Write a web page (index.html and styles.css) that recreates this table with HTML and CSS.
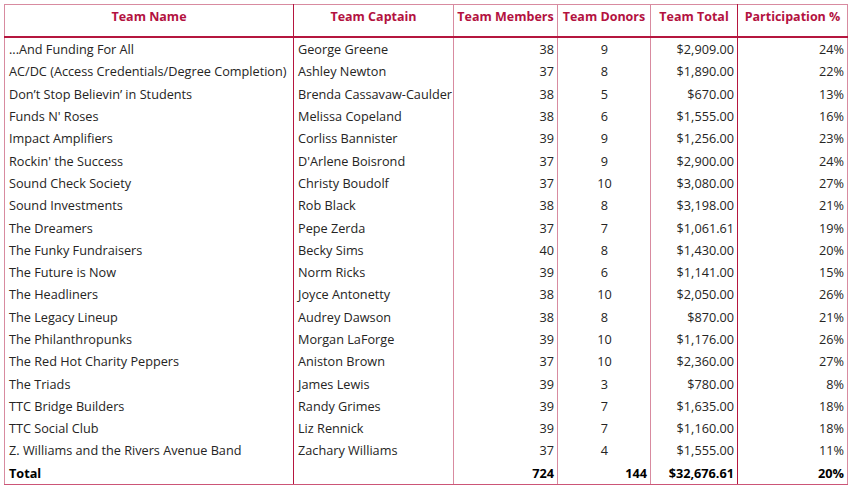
FILE: index.html
```html
<!DOCTYPE html>
<html>
<head>
<meta charset="utf-8">
<link rel="stylesheet" href="styles.css">
</head>
<body>
<table class="grid">
  <colgroup>
    <col class="c-name"><col class="c-captain"><col class="c-members"><col class="c-donors"><col class="c-total"><col class="c-part">
  </colgroup>
  <thead>
    <tr>
      <th class="b-dark">Team Name</th>
      <th>Team Captain</th>
      <th>Team Members</th>
      <th>Team Donors</th>
      <th class="b-dark">Team Total</th>
      <th>Participation %</th>
    </tr>
  </thead>
  <tbody>
    <tr><td class="b-dark">...And Funding For All</td><td>George Greene</td><td class="r">38</td><td class="c">9</td><td class="r b-dark">$2,909.00</td><td class="r">24%</td></tr>
    <tr><td class="b-dark">AC/DC (Access Credentials/Degree Completion)</td><td>Ashley Newton</td><td class="r">37</td><td class="c">8</td><td class="r b-dark">$1,890.00</td><td class="r">22%</td></tr>
    <tr><td class="b-dark">Don’t Stop Believin’ in Students</td><td>Brenda Cassavaw-Caulder</td><td class="r">38</td><td class="c">5</td><td class="r b-dark">$670.00</td><td class="r">13%</td></tr>
    <tr><td class="b-dark">Funds N' Roses</td><td>Melissa Copeland</td><td class="r">38</td><td class="c">6</td><td class="r b-dark">$1,555.00</td><td class="r">16%</td></tr>
    <tr><td class="b-dark">Impact Amplifiers</td><td>Corliss Bannister</td><td class="r">39</td><td class="c">9</td><td class="r b-dark">$1,256.00</td><td class="r">23%</td></tr>
    <tr><td class="b-dark">Rockin' the Success</td><td>D'Arlene Boisrond</td><td class="r">37</td><td class="c">9</td><td class="r b-dark">$2,900.00</td><td class="r">24%</td></tr>
    <tr><td class="b-dark">Sound Check Society</td><td>Christy Boudolf</td><td class="r">37</td><td class="c">10</td><td class="r b-dark">$3,080.00</td><td class="r">27%</td></tr>
    <tr><td class="b-dark">Sound Investments</td><td>Rob Black</td><td class="r">38</td><td class="c">8</td><td class="r b-dark">$3,198.00</td><td class="r">21%</td></tr>
    <tr><td class="b-dark">The Dreamers</td><td>Pepe Zerda</td><td class="r">37</td><td class="c">7</td><td class="r b-dark">$1,061.61</td><td class="r">19%</td></tr>
    <tr><td class="b-dark">The Funky Fundraisers</td><td>Becky Sims</td><td class="r">40</td><td class="c">8</td><td class="r b-dark">$1,430.00</td><td class="r">20%</td></tr>
    <tr><td class="b-dark">The Future is Now</td><td>Norm Ricks</td><td class="r">39</td><td class="c">6</td><td class="r b-dark">$1,141.00</td><td class="r">15%</td></tr>
    <tr><td class="b-dark">The Headliners</td><td>Joyce Antonetty</td><td class="r">38</td><td class="c">10</td><td class="r b-dark">$2,050.00</td><td class="r">26%</td></tr>
    <tr><td class="b-dark">The Legacy Lineup</td><td>Audrey Dawson</td><td class="r">38</td><td class="c">8</td><td class="r b-dark">$870.00</td><td class="r">21%</td></tr>
    <tr><td class="b-dark">The Philanthropunks</td><td>Morgan LaForge</td><td class="r">39</td><td class="c">10</td><td class="r b-dark">$1,176.00</td><td class="r">26%</td></tr>
    <tr><td class="b-dark">The Red Hot Charity Peppers</td><td>Aniston Brown</td><td class="r">37</td><td class="c">10</td><td class="r b-dark">$2,360.00</td><td class="r">27%</td></tr>
    <tr><td class="b-dark">The Triads</td><td>James Lewis</td><td class="r">39</td><td class="c">3</td><td class="r b-dark">$780.00</td><td class="r">8%</td></tr>
    <tr><td class="b-dark">TTC Bridge Builders</td><td>Randy Grimes</td><td class="r">39</td><td class="c">7</td><td class="r b-dark">$1,635.00</td><td class="r">18%</td></tr>
    <tr><td class="b-dark">TTC Social Club</td><td>Liz Rennick</td><td class="r">39</td><td class="c">7</td><td class="r b-dark">$1,160.00</td><td class="r">18%</td></tr>
    <tr><td class="b-dark">Z. Williams and the Rivers Avenue Band</td><td>Zachary Williams</td><td class="r">37</td><td class="c">4</td><td class="r b-dark">$1,555.00</td><td class="r">11%</td></tr>
    <tr class="total"><td class="b-dark">Total</td><td></td><td class="r">724</td><td class="r">144</td><td class="r b-dark">$32,676.61</td><td class="r">20%</td></tr>
  </tbody>
</table>
</body>
</html>
```

FILE: styles.css
```css
html, body {
  margin: 0;
  padding: 0;
  background: #ffffff;
}

body {
  padding: 4px 0 0 4px;
  font-family: "Open Sans", "Noto Sans", sans-serif;
  font-size: 12.7px;
  color: #252423;
}

.grid {
  border-collapse: collapse;
  table-layout: fixed;
  width: 843px;
  border: 1px solid #cc5577;
}

.c-name { width: 289px; }
.c-captain { width: 160px; }
.c-members { width: 104px; }
.c-donors { width: 93px; }
.c-total { width: 87px; }
.c-part { width: 110px; }

.grid th {
  height: 24px;
  padding: 0 3px 7px;
  color: #b3123f;
  font-weight: 700;
  font-size: 12.5px;
  line-height: 16px;
  text-align: center;
  vertical-align: middle;
  white-space: nowrap;
  border-left: 1px solid #d88ba0;
  border-right: 1px solid #d88ba0;
  border-top: 1px solid #d88ba0;
  border-bottom: 2px solid #b5163f;
}

.grid td {
  height: 22.3px;
  padding: 0 3px 0 4px;
  line-height: 16px;
  white-space: nowrap;
  overflow: hidden;
  border-left: 1px solid #d88ba0;
  border-right: 1px solid #d88ba0;
}

.grid td.b-dark,
.grid th.b-dark {
  border-right-color: #b5163f;
}

.grid td.r { text-align: right; }
.grid td.c { text-align: center; }

.grid tr.total td {
  font-weight: 700;
  color: #000000;
  border-bottom: 1px solid #cc5577;
}
```
